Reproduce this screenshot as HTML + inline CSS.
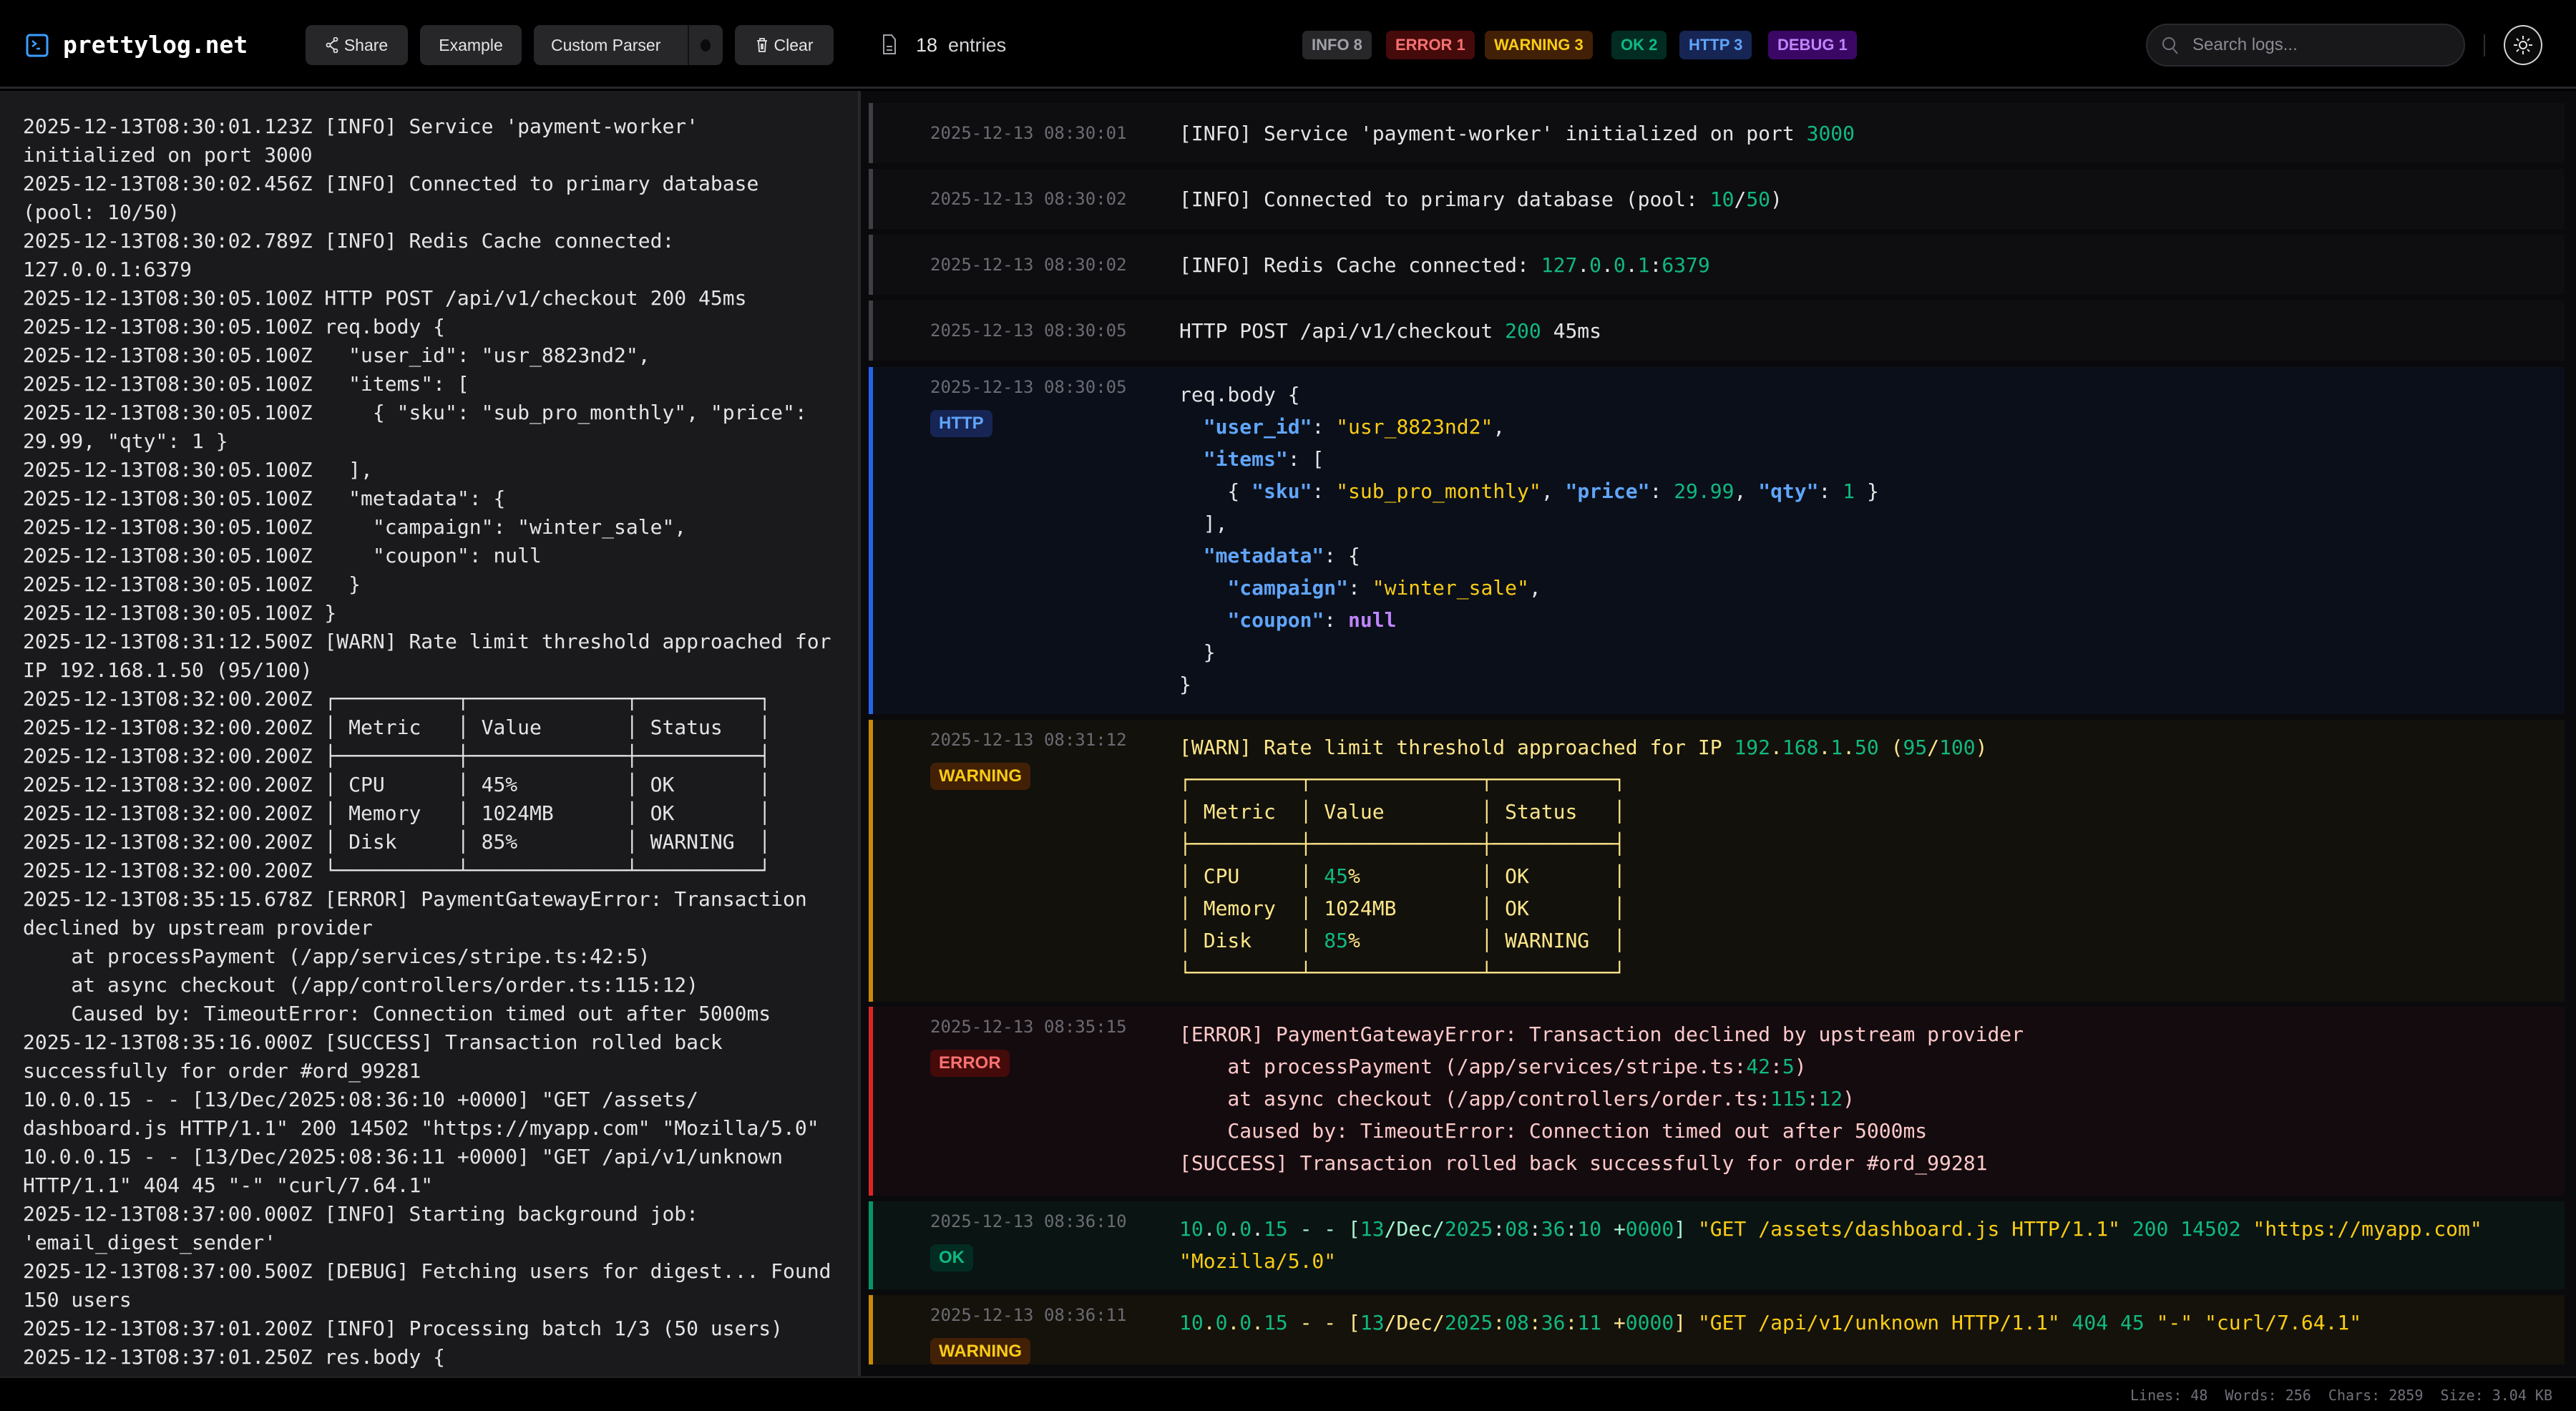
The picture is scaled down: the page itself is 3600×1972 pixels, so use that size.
<!DOCTYPE html>
<html><head><meta charset="utf-8"><style>
*{box-sizing:border-box;margin:0;padding:0}
html,body{width:3600px;height:1972px;overflow:hidden;background:#000;color:#e4e4e7}
.mono{font-family:"DejaVu Sans Mono","Liberation Mono",monospace}
.sans{font-family:"Liberation Sans",sans-serif}
#hdr{position:absolute;left:0;top:0;width:3600px;height:124px;background:#000;border-bottom:3px solid #27272a}
.btn{position:absolute;top:35px;height:56px;background:#27272a;border-radius:9px;color:#e4e4e7;font:23px "Liberation Sans",sans-serif;line-height:56px;text-align:center}
.tb{position:absolute;top:43px;height:40px;border-radius:7px;font:bold 22px "Liberation Sans",sans-serif;line-height:40px;padding:0 13px}
#left{position:absolute;left:0;top:127px;width:1199px;height:1796px;background:#1a1a1d;overflow:hidden}
#left pre{font-family:"DejaVu Sans Mono",monospace;font-size:28px;line-height:40px;color:#e4e4e7;padding:30px 0 0 32px;white-space:pre}
#div{position:absolute;left:1199px;top:127px;width:4px;height:1796px;background:#27272a}
#right{position:absolute;left:1203px;top:127px;width:2397px;height:1780px;background:#0a0a0c;overflow:hidden}
#rbot{position:absolute;left:1203px;top:1907px;width:2397px;height:16px;background:#0a0a0c}
.e{position:absolute;left:11px;width:2370px;border-left:6px solid;display:flex;padding-top:16px}
.e.c{align-items:center;padding-top:0}
.ts{width:428px;padding-left:80px;font:24px "DejaVu Sans Mono",monospace;line-height:22px;color:#6b6b73;margin-top:1px;flex:none;white-space:nowrap}
.e.c .ts{margin-top:0}
.bd{display:inline-block;margin-top:21px;height:38px;padding:0 12px;border-radius:8px;font:bold 24px "Liberation Sans",sans-serif;line-height:38px}
.m{font:28px "DejaVu Sans Mono",monospace;line-height:45px;white-space:pre}
.g{color:#10b981}.y{color:#facc15}.k{color:#60a5fa;font-weight:bold}.p{color:#c084fc;font-weight:bold}.lg{color:#a7f3d0}
#ftr{position:absolute;left:0;top:1923px;width:3600px;height:49px;background:#000;border-top:3px solid #1f1f22}
</style></head><body>
<div id="hdr">
 <svg style="position:absolute;left:36px;top:47px" width="32" height="33" viewBox="0 0 32 33"><rect x="2" y="2" width="28" height="29" rx="4" fill="none" stroke="#3b9eff" stroke-width="3"/><path d="M9 10l5 4-5 4M15 21h5" fill="none" stroke="#3b9eff" stroke-width="2.5"/></svg>
 <div class="mono" style="position:absolute;left:88px;top:42px;font-weight:bold;font-size:33px;color:#fff;line-height:42px">prettylog.net</div>
 <div class="btn" style="left:427px;width:143px"><svg style="vertical-align:-3px;margin-right:8px" width="18" height="22" viewBox="0 0 18 22"><circle cx="14" cy="3" r="2.5" fill="none" stroke="#e4e4e7" stroke-width="1.8"/><circle cx="4" cy="11" r="2.5" fill="none" stroke="#e4e4e7" stroke-width="1.8"/><circle cx="14" cy="19" r="2.5" fill="none" stroke="#e4e4e7" stroke-width="1.8"/><path d="M6 10l6-5M6 12l6 5" stroke="#e4e4e7" stroke-width="1.8"/></svg>Share</div>
 <div class="btn" style="left:587px;width:142px">Example</div>
 <div class="btn" style="left:746px;width:264px;text-align:left;padding-left:24px">Custom Parser<span style="position:absolute;left:215px;top:0;width:2px;height:56px;background:#111"></span><span style="position:absolute;left:233px;top:20px;width:14px;height:17px;border-radius:50%;background:#0a0a0a"></span></div>
 <div class="btn" style="left:1027px;width:138px"><svg style="vertical-align:-3px;margin-right:8px" width="18" height="22" viewBox="0 0 18 22"><path d="M2 5h14M6 5V2h6v3M4 5l1 15h8l1-15M8 9v8M10 9v8" fill="none" stroke="#e4e4e7" stroke-width="1.8"/></svg>Clear</div>
 <svg style="position:absolute;left:1233px;top:47px" width="20" height="30" viewBox="0 0 20 30"><path d="M2 2h11l5 6v20H2z" fill="none" stroke="#a1a1aa" stroke-width="2"/><path d="M6 18h8M6 23h8" stroke="#a1a1aa" stroke-width="2"/></svg>
 <div class="sans" style="position:absolute;left:1280px;top:46px;font-size:27px;line-height:34px;color:#e4e4e7">18&nbsp; <span style="color:#d4d4d8">entries</span></div>
 <div class="tb" style="left:1820px;background:#27272a;color:#a1a1aa">INFO 8</div>
 <div class="tb" style="left:1937px;background:#450a0a;color:#f87171">ERROR 1</div>
 <div class="tb" style="left:2075px;background:#422006;color:#facc15">WARNING 3</div>
 <div class="tb" style="left:2252px;background:#022c22;color:#10b981">OK 2</div>
 <div class="tb" style="left:2347px;background:#172554;color:#60a5fa">HTTP 3</div>
 <div class="tb" style="left:2471px;background:#3b0764;color:#c084fc">DEBUG 1</div>
 <div style="position:absolute;left:2999px;top:33px;width:446px;height:60px;border-radius:30px;background:#18181b;border:2px solid #2a2a2e"></div>
 <svg style="position:absolute;left:3020px;top:50px" width="26" height="28" viewBox="0 0 26 28"><circle cx="11" cy="11" r="8" fill="none" stroke="#71717a" stroke-width="2"/><path d="M17 18l6 7" stroke="#71717a" stroke-width="2"/></svg>
 <div class="sans" style="position:absolute;left:3064px;top:47px;font-size:24px;line-height:32px;color:#8b8b93">Search logs...</div>
 <div style="position:absolute;left:3471px;top:48px;width:2px;height:31px;background:#2e2e32"></div>
 <div style="position:absolute;left:3499px;top:35px;width:54px;height:56px;border-radius:50%;border:2px solid #d4d4d8;background:#0a0a0a"></div>
 <svg style="position:absolute;left:3510px;top:47px" width="32" height="32" viewBox="0 0 32 32"><circle cx="16" cy="16" r="5" fill="none" stroke="#e4e4e7" stroke-width="2"/><path d="M16 3v5M16 24v5M3 16h5M24 16h5M7 7l3 3M22 22l3 3M7 25l3-3M22 10l3-3" stroke="#e4e4e7" stroke-width="2"/></svg>
</div>

<div id="left"><pre>2025-12-13T08:30:01.123Z [INFO] Service 'payment-worker'
initialized on port 3000
2025-12-13T08:30:02.456Z [INFO] Connected to primary database
(pool: 10/50)
2025-12-13T08:30:02.789Z [INFO] Redis Cache connected:
127.0.0.1:6379
2025-12-13T08:30:05.100Z HTTP POST /api/v1/checkout 200 45ms
2025-12-13T08:30:05.100Z req.body {
2025-12-13T08:30:05.100Z   "user_id": "usr_8823nd2",
2025-12-13T08:30:05.100Z   "items": [
2025-12-13T08:30:05.100Z     { "sku": "sub_pro_monthly", "price":
29.99, "qty": 1 }
2025-12-13T08:30:05.100Z   ],
2025-12-13T08:30:05.100Z   "metadata": {
2025-12-13T08:30:05.100Z     "campaign": "winter_sale",
2025-12-13T08:30:05.100Z     "coupon": null
2025-12-13T08:30:05.100Z   }
2025-12-13T08:30:05.100Z }
2025-12-13T08:31:12.500Z [WARN] Rate limit threshold approached for
IP 192.168.1.50 (95/100)
2025-12-13T08:32:00.200Z ┌──────────┬─────────────┬──────────┐
2025-12-13T08:32:00.200Z │ Metric   │ Value       │ Status   │
2025-12-13T08:32:00.200Z ├──────────┼─────────────┼──────────┤
2025-12-13T08:32:00.200Z │ CPU      │ 45%         │ OK       │
2025-12-13T08:32:00.200Z │ Memory   │ 1024MB      │ OK       │
2025-12-13T08:32:00.200Z │ Disk     │ 85%         │ WARNING  │
2025-12-13T08:32:00.200Z └──────────┴─────────────┴──────────┘
2025-12-13T08:35:15.678Z [ERROR] PaymentGatewayError: Transaction
declined by upstream provider
    at processPayment (/app/services/stripe.ts:42:5)
    at async checkout (/app/controllers/order.ts:115:12)
    Caused by: TimeoutError: Connection timed out after 5000ms
2025-12-13T08:35:16.000Z [SUCCESS] Transaction rolled back
successfully for order #ord_99281
10.0.0.15 - - [13/Dec/2025:08:36:10 +0000] "GET /assets/
dashboard.js HTTP/1.1" 200 14502 "https://myapp.com" "Mozilla/5.0"
10.0.0.15 - - [13/Dec/2025:08:36:11 +0000] "GET /api/v1/unknown
HTTP/1.1" 404 45 "-" "curl/7.64.1"
2025-12-13T08:37:00.000Z [INFO] Starting background job:
'email_digest_sender'
2025-12-13T08:37:00.500Z [DEBUG] Fetching users for digest... Found
150 users
2025-12-13T08:37:01.200Z [INFO] Processing batch 1/3 (50 users)
2025-12-13T08:37:01.250Z res.body {
</pre></div>
<div id="div"></div>

<div id="right">
 <div class="e c" style="top:17px;height:84px;border-color:#3f3f46;background:#0e0e11"><div class="ts">2025-12-13 08:30:01</div><div class="m">[INFO] Service 'payment-worker' initialized on port <span class="g">3000</span></div></div>
 <div class="e c" style="top:109px;height:84px;border-color:#3f3f46;background:#0e0e11"><div class="ts">2025-12-13 08:30:02</div><div class="m">[INFO] Connected to primary database (pool: <span class="g">10</span>/<span class="g">50</span>)</div></div>
 <div class="e c" style="top:201px;height:84px;border-color:#3f3f46;background:#0e0e11"><div class="ts">2025-12-13 08:30:02</div><div class="m">[INFO] Redis Cache connected: <span class="g">127</span>.<span class="g">0</span>.<span class="g">0</span>.<span class="g">1</span>:<span class="g">6379</span></div></div>
 <div class="e c" style="top:293px;height:84px;border-color:#3f3f46;background:#0e0e11"><div class="ts">2025-12-13 08:30:05</div><div class="m">HTTP POST /api/v1/checkout <span class="g">200</span> 45ms</div></div>
 <div class="e" style="top:386px;height:485px;border-color:#2563eb;background:#0a0f19"><div class="ts">2025-12-13 08:30:05<br><span class="bd" style="background:#172554;color:#60a5fa">HTTP</span></div><div class="m">req.body {
  <span class="k">"user_id"</span>: <span class="y">"usr_8823nd2"</span>,
  <span class="k">"items"</span>: [
    { <span class="k">"sku"</span>: <span class="y">"sub_pro_monthly"</span>, <span class="k">"price"</span>: <span class="g">29.99</span>, <span class="k">"qty"</span>: <span class="g">1</span> }
  ],
  <span class="k">"metadata"</span>: {
    <span class="k">"campaign"</span>: <span class="y">"winter_sale"</span>,
    <span class="k">"coupon"</span>: <span class="p">null</span>
  }
}</div></div>
 <div class="e" style="top:879px;height:394px;border-color:#ca8a04;background:#13110b"><div class="ts">2025-12-13 08:31:12<br><span class="bd" style="background:#422006;color:#facc15">WARNING</span></div><div class="m" style="color:#fde68a">[WARN] Rate limit threshold approached for IP <span class="g">192</span>.<span class="g">168</span>.<span class="g">1</span>.<span class="g">50</span> (<span class="g">95</span>/<span class="g">100</span>)
┌─────────┬──────────────┬──────────┐
│ Metric  │ Value        │ Status   │
├─────────┼──────────────┼──────────┤
│ CPU     │ <span class="g">45</span>%          │ OK       │
│ Memory  │ 1024MB       │ OK       │
│ Disk    │ <span class="g">85</span>%          │ WARNING  │
└─────────┴──────────────┴──────────┘</div></div>
 <div class="e" style="top:1280px;height:264px;border-color:#dc2626;background:#140b0f"><div class="ts">2025-12-13 08:35:15<br><span class="bd" style="background:#450a0a;color:#f87171">ERROR</span></div><div class="m" style="color:#fecaca">[ERROR] PaymentGatewayError: Transaction declined by upstream provider
    at processPayment (/app/services/stripe.ts:<span class="g">42</span>:<span class="g">5</span>)
    at async checkout (/app/controllers/order.ts:<span class="g">115</span>:<span class="g">12</span>)
    Caused by: TimeoutError: Connection timed out after 5000ms
[SUCCESS] Transaction rolled back successfully for order #ord_99281</div></div>
 <div class="e" style="top:1552px;height:123px;border-color:#059669;background:#0a1412"><div class="ts">2025-12-13 08:36:10<br><span class="bd" style="background:#022c22;color:#10b981">OK</span></div><div class="m"><span class="g">10</span>.<span class="g">0</span>.<span class="g">0</span>.<span class="g">15</span> <span class="lg">- - [</span><span class="g">13</span><span class="lg">/Dec/</span><span class="g">2025</span>:<span class="g">08</span>:<span class="g">36</span>:<span class="g">10</span> <span class="lg">+</span><span class="g">0000</span><span class="lg">]</span> <span class="y">"GET /assets/dashboard.js HTTP/1.1"</span> <span class="g">200</span> <span class="g">14502</span> <span class="y">"https://myapp.com"</span>
<span class="y">"Mozilla/5.0"</span></div></div>
 <div class="e" style="top:1683px;height:130px;border-color:#ca8a04;background:#15120b"><div class="ts">2025-12-13 08:36:11<br><span class="bd" style="background:#422006;color:#facc15">WARNING</span></div><div class="m" style="color:#fde68a"><span class="g">10</span>.<span class="g">0</span>.<span class="g">0</span>.<span class="g">15</span> - - [<span class="g">13</span>/Dec/<span class="g">2025</span>:<span class="g">08</span>:<span class="g">36</span>:<span class="g">11</span> +<span class="g">0000</span>] <span class="y">"GET /api/v1/unknown HTTP/1.1"</span> <span class="g">404</span> <span class="g">45</span> <span class="y">"-"</span> <span class="y">"curl/7.64.1"</span></div></div>
</div>
<div id="rbot"></div>
<div id="ftr"><div class="mono" style="position:absolute;right:33px;top:12px;font-size:20px;line-height:24px;color:#71717a;white-space:pre">Lines: 48  Words: 256  Chars: 2859  Size: 3.04 KB</div></div>
</body></html>
